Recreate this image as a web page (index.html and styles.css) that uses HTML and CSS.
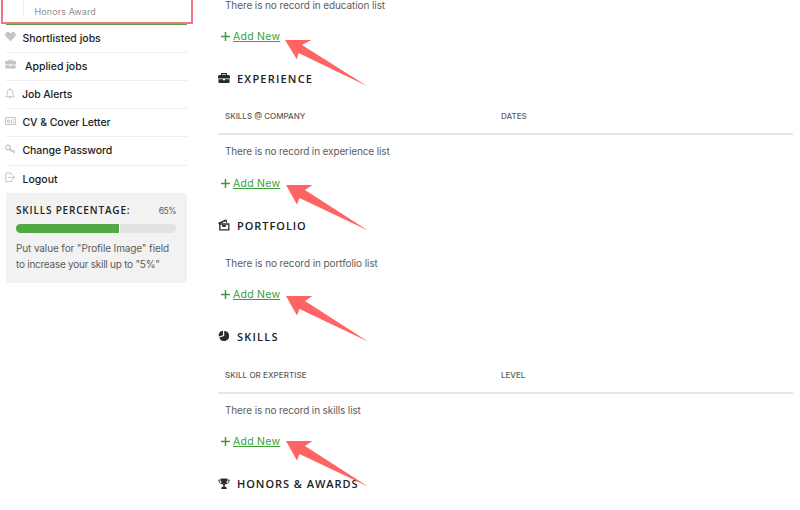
FILE: index.html
```
<!DOCTYPE html>
<html lang="en">
<head>
<meta charset="utf-8">
<title>Candidate Resume</title>
<link rel="stylesheet" href="styles.css">
</head>
<body>
<div class="page">
  <aside class="sidebar">
    <div class="submenu"><span class="submenu-item">Honors Award</span></div>
    <ul class="menu">
      <li><svg class="mi" viewBox="0 0 11 11"><path fill="#c4c4c4" d="M5.5 10.2 1 5.7C-.7 3.6.6.9 2.8.9c1.300 0 2.200.7 2.700 1.500C6 1.600 6.900.9 8.200.9c2.200 0 3.500 2.700 1.800 4.800z"/></svg><span class="shortlisted">Shortlisted jobs</span></li>
      <li><svg class="mi" viewBox="0 0 11 11"><path fill="#c4c4c4" d="M3 2V.8h5V2h2.200l.8.8v2.700H0V2.800L.8 2zm1 0h3v-.4H4zM.4 6.200H4.500v1h2v-1h4.100v3.300H.4z"/></svg><span class="applied">Applied jobs</span></li>
      <li><svg class="mi" viewBox="0 0 11 11"><path fill="none" stroke="#c4c4c4" d="M.8 8.700C2.300 7.300 2.200 6 2.300 4.200 2.400.3 7.600.3 7.700 4.200c.1 1.800 0 3.100 1.500 4.500zM4 9.200c.2 1.200 1.800 1.200 2 0M5 0v1"/></svg><span class="alerts">Job Alerts</span></li>
      <li><svg class="mi" viewBox="0 0 11 11"><path fill="none" stroke="#c4c4c4" d="M.5 1.500h10v7H.5zM2.500 4h2v2.500h-2zM6.500 3.500v4M8.500 3v1.500m0 1v1.500"/></svg><span class="letter">CV &amp; Cover Letter</span></li>
      <li><svg class="mi" viewBox="0 0 11 11"><g fill="none" stroke="#c4c4c4" stroke-width="1.200"><circle cx="3" cy="3.500" r="2.300"/><path d="M4.800 4.800 9.800 9M6.500 6.200 5.300 7.700M8.500 8l1.300-1.700"/></g></svg><span class="password">Change Password</span></li>
      <li><svg class="mi" viewBox="0 0 11 11"><path fill="none" stroke="#c4c4c4" d="M6.500 3V1H.8v8.500h5.700v-2M3 5.300h6.500M7.800 3.500l1.900 1.800-1.900 1.800"/></svg><span class="logout">Logout</span></li>
    </ul>
    <section class="progress">
      <div class="progress-head"><h3>SKILLS PERCENTAGE:</h3><span class="percent">65%</span></div>
      <div class="bar"><div class="fill"></div></div>
      <p><span class="tip-one">Put value for "Profile Image" field</span><br><span class="tip-two">to increase your skill up to "5%"</span></p>
    </section>
  </aside>
  <main class="content">
    <section>
      <p class="record r-edu">There is no record in education list</p>
      <div class="add"><svg class="plus" viewBox="0 0 9 9"><path d="M4.500 0v9M0 4.500h9"/></svg><a>Add New</a><svg class="arrow first" viewBox="0 0 82 46"><path d="M0 0H26.500L17 5 82 46 13.500 13 12 19.500z"/></svg></div>
    </section>
    <section>
      <h2><svg viewBox="0 0 12 12"><path fill="#2b2b2b" d="M3 3V1h6v2h2l1 1v2.500H0V4l1-1zm1.200 0h3.600v-.8H4.200zM.5 7.200H5v1h2v-1h4.500V11H.5z"/></svg><span class="h-exp">EXPERIENCE</span></h2>
      <div class="thead"><span class="th-company">SKILLS @ COMPANY</span><span class="th-dates">DATES</span></div>
      <p class="record">There is no record in experience list</p>
      <div class="add"><svg class="plus" viewBox="0 0 9 9"><path d="M4.500 0v9M0 4.500h9"/></svg><a>Add New</a><svg class="arrow" viewBox="0 0 82 46"><path d="M0 0H26.500L19 5 82 45.500 13.500 13 11 19.500z"/></svg></div>
    </section>
    <section>
      <h2><svg viewBox="0 0 12 12"><path fill="none" stroke="#2b2b2b" stroke-width="1.300" d="M1.800 5h9v5.800h-9zM.5 4.300 7.800 1l1 2.500M1.500 5l-.8-1.500"/><path fill="#2b2b2b" d="M4 6h4v1.700H4zM2.500 3.500 7.500 1.300l.5 1-4 1.500z"/></svg><span class="h-port">PORTFOLIO</span></h2>
      <p class="record r-port">There is no record in portfolio list</p>
      <div class="add"><svg class="plus" viewBox="0 0 9 9"><path d="M4.500 0v9M0 4.500h9"/></svg><a>Add New</a><svg class="arrow" viewBox="0 0 82 46"><path d="M0 0H26.500L19 5 82 45.500 13.500 13 11 19.500z"/></svg></div>
    </section>
    <section>
      <h2><svg viewBox="0 0 12 12"><path fill="#2b2b2b" d="M6.200 1A5 5 0 1 1 1.300 7.500L6.200 6zM5 .8v4.400L.7 6.400C.3 3.300 2.200 1.100 5 .8z"/></svg><span class="h-skills">SKILLS</span></h2>
      <div class="thead"><span class="th-skill">SKILL OR EXPERTISE</span><span class="th-level">LEVEL</span></div>
      <p class="record">There is no record in skills list</p>
      <div class="add"><svg class="plus" viewBox="0 0 9 9"><path d="M4.500 0v9M0 4.500h9"/></svg><a>Add New</a><svg class="arrow last" viewBox="0 0 82 46"><path d="M0 0H26.500L19 5 82 45.500 13.500 13 11 19.500z"/></svg></div>
    </section>
    <section>
      <h2><svg viewBox="0 0 12 12"><path fill="#2b2b2b" d="M2.800.5h6.400C9.200 4 8.300 6 6.700 6.800V8.500l2 1V11H3.300V9.500l2-1V6.800C3.700 6 2.800 4 2.800.5z"/><path fill="none" stroke="#2b2b2b" d="M3 2H.8C1 4.200 2 5.500 4 5.800M9 2h2.200C11 4.200 10 5.500 8 5.800"/></svg><span class="h-awards">HONORS &amp; AWARDS</span></h2>
    </section>
  </main>
</div>
</body>
</html>
```
FILE: styles.css
```
* { box-sizing: border-box; }
body { margin: 0; background: #fff; font-family: Inter, sans-serif; font-size: 10px; color: #5c5c5c; overflow: hidden; }
h2, h3, p, ul { margin: 0; padding: 0; }
span, a { white-space: nowrap; }
.page { display: grid; grid-template-columns: 193px 575px; column-gap: 25px; height: 510px; }
.submenu { height: 24px; margin-left: 1px; border: 2px solid #f27485; border-top: 0; padding-left: 20px; display: flex; }
.submenu-item { border-left: 1px solid #eee; height: 15px; padding-left: 10.500px; padding-top: 5px; line-height: 13px; font-size: 9px; color: #8f8f8f; letter-spacing: .1px; }
.menu { list-style: none; width: 181px; margin-left: 6px; border-top: 1px solid #52a845; }
.menu li { height: 28.200px; display: flex; align-items: center; border-bottom: 1px solid #eee; color: #222; font-size: 10.500px; font-weight: 500; }
.menu li:first-child { height: 27.800px; }
.menu li:last-child { border: 0; height: 27.700px; }
.mi { width: 11px; height: 11px; margin: -3px 6.500px 0 -1px; flex: none; }
.applied { margin-left: 2.500px; }
.alerts { margin-left: -.5px; letter-spacing: -.1px; }
.letter, .password { letter-spacing: -.080px; }
.progress { width: 181px; height: 90px; margin-left: 6px; background: #f2f2f2; padding: 10px 11px 0 10px; }
.progress-head { display: flex; justify-content: space-between; align-items: center; height: 15px; }
h3 { font: 600 10px/15px "Open Sans", sans-serif; color: #222; letter-spacing: .820px; white-space: nowrap; }
.percent { font-size: 8.500px; letter-spacing: -.5px; }
.bar { height: 9px; margin-top: 6px; border-radius: 5px; background: #e2e2e2; overflow: hidden; }
.fill { width: 65%; height: 9px; background: #52a845; border-right: 1px solid #fff; }
.progress p { margin-top: 6.500px; line-height: 16.500px; }
.tip-one { letter-spacing: -.120px; }
.tip-two { letter-spacing: -.250px; }
.record { height: 33px; line-height: 33px; padding-left: 7px; white-space: nowrap; letter-spacing: -.130px; }
.r-edu { height: 21px; line-height: 10px; letter-spacing: -.1px; }
.r-port { line-height: 34px; letter-spacing: -.090px; }
.add { position: relative; height: 30px; padding-left: 3px; display: flex; align-items: center; color: #3a9f35; font-size: 10.500px; }
.add a { text-decoration: underline; text-underline-offset: 1px; letter-spacing: .250px; }
.plus { width: 9px; height: 9px; margin-right: 3px; fill: none; stroke: #3a9f35; stroke-width: 1.500; }
.arrow { position: absolute; left: 68px; top: 17px; width: 82px; height: 46px; fill: #ff6464; z-index: 2; }
.arrow.first { left: 67px; top: 19px; }
.arrow.last { top: 14px; }
.content { min-width: 0; }
h2 { height: 48.200px; padding-top: 6px; display: flex; align-items: center; gap: 7px; font: 600 11px "Open Sans", sans-serif; color: #222; letter-spacing: .950px; }
h2 svg { width: 12px; height: 12px; flex: none; }
.h-exp, .h-skills { letter-spacing: 1.200px; }
.thead { height: 36px; border-bottom: 2px solid #e6e6e6; display: grid; grid-template-columns: 276px 1fr; align-items: center; padding-left: 7px; font-size: 8px; font-weight: 500; }
.th-skill { letter-spacing: .060px; }
```
